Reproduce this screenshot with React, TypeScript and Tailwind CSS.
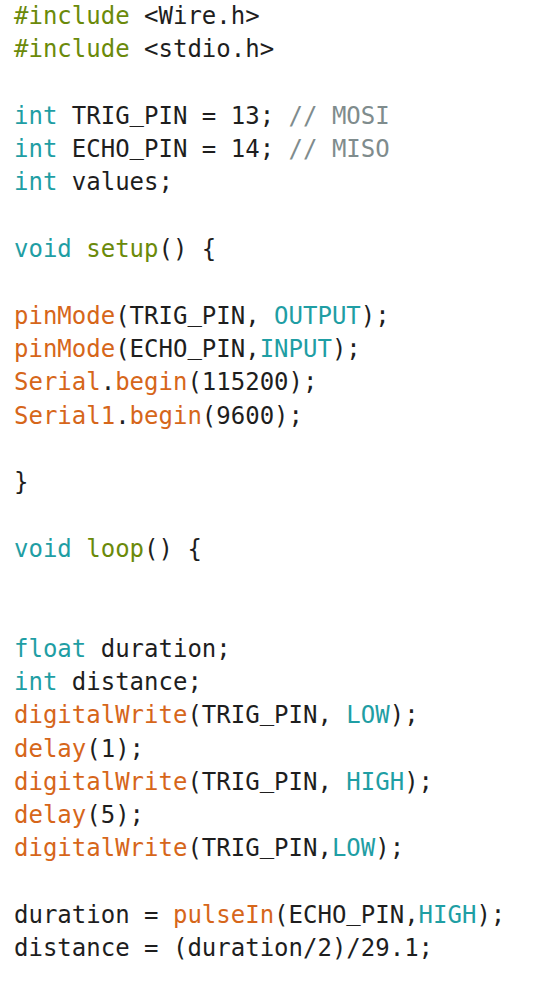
import React from "react";

type Tok = [string, string?];

const K = "text-[#1f9ea4]"; // teal keyword
const F = "text-[#d6661a]"; // orange function
const G = "text-[#6b8a0a]"; // olive
const C = "text-[#7f8c8d]"; // comment

const lines: Tok[][] = [
  [["#include", G], [" <Wire.h>"]],
  [["#include", G], [" <stdio.h>"]],
  [],
  [["int", K], [" TRIG_PIN = 13; "], ["// MOSI", C]],
  [["int", K], [" ECHO_PIN = 14; "], ["// MISO", C]],
  [["int", K], [" values;"]],
  [],
  [["void", K], [" "], ["setup", G], ["() {"]],
  [],
  [["pinMode", F], ["(TRIG_PIN, "], ["OUTPUT", K], [");"]],
  [["pinMode", F], ["(ECHO_PIN,"], ["INPUT", K], [");"]],
  [["Serial", F], ["."], ["begin", F], ["(115200);"]],
  [["Serial1", F], ["."], ["begin", F], ["(9600);"]],
  [],
  [["}"]],
  [],
  [["void", K], [" "], ["loop", G], ["() {"]],
  [],
  [],
  [["float", K], [" duration;"]],
  [["int", K], [" distance;"]],
  [["digitalWrite", F], ["(TRIG_PIN, "], ["LOW", K], [");"]],
  [["delay", F], ["(1);"]],
  [["digitalWrite", F], ["(TRIG_PIN, "], ["HIGH", K], [");"]],
  [["delay", F], ["(5);"]],
  [["digitalWrite", F], ["(TRIG_PIN,"], ["LOW", K], [");"]],
  [],
  [["duration = "], ["pulseIn", F], ["(ECHO_PIN,"], ["HIGH", K], [");"]],
  [["distance = (duration/2)/29.1;"]],
];

function renderText(t: string) {
  const parts = t.split("_");
  const out: React.ReactNode[] = [];
  parts.forEach((p, i) => {
    if (i > 0)
      out.push(
        <span key={"u" + i} className="relative top-[-3px]">
          _
        </span>
      );
    out.push(p);
  });
  return out;
}

export default function App() {
  return (
    <div className="w-[560px] h-[1004px] bg-white overflow-hidden">
      <div className="pl-[14px] font-['DejaVu_Sans_Mono',monospace] text-[24px] text-[#1e1e1e]">
        {lines.map((l, i) => (
          <div key={i} className="whitespace-pre leading-[33.3px] min-h-[33.3px]">
            {l.map(([t, c], j) => (
              <span key={j} className={c}>
                {renderText(t)}
              </span>
            ))}
          </div>
        ))}
      </div>
    </div>
  );
}
